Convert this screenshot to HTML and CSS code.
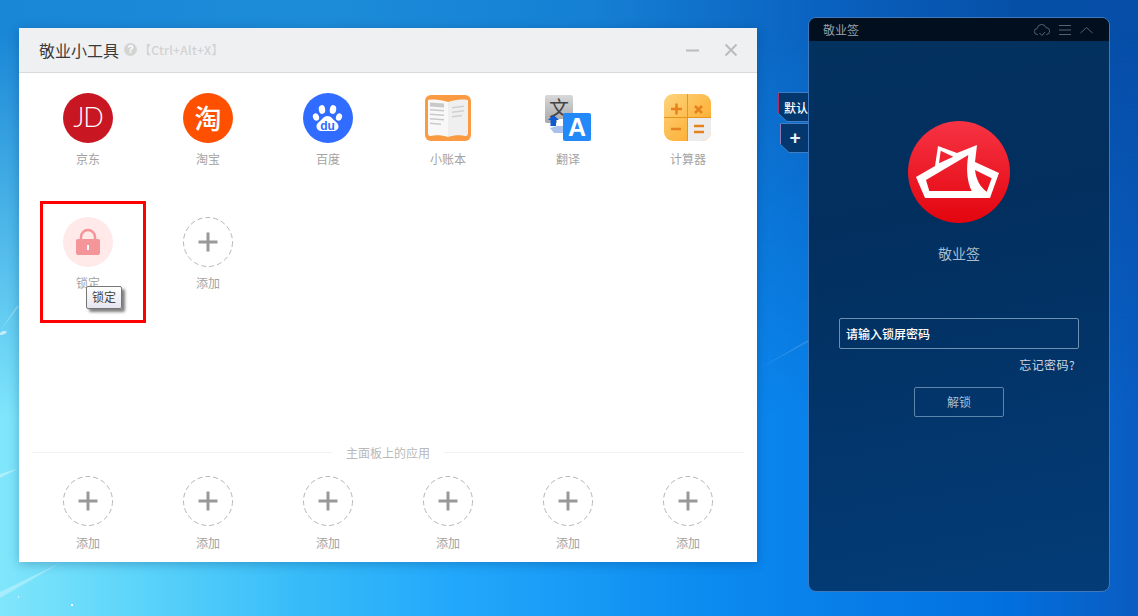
FILE: index.html
```html
<!DOCTYPE html>
<html lang="zh-CN">
<head>
<meta charset="utf-8">
<title>敬业小工具</title>
<link rel="stylesheet" href="styles.css">
</head>
<body>
<div class="desktop">
  <svg class="wallpaper" viewBox="0 0 1138 616" width="1138" height="616">
    <path d="M0 598 L62 562 L0 592Z" fill="#fff" fill-opacity=".3"/>
    <path d="M0 478 L19 468 L0 474Z" fill="#fff" fill-opacity=".35"/>
    <path d="M0 331 L19 306 L17 306Z" fill="#fff" fill-opacity=".35"/>
    <path d="M0 333 q4 -4 7 -1 q-2 3 -7 3Z" fill="#fff" fill-opacity=".6"/>
    <path d="M757 370 L808 340 L808 342Z" fill="#fff" fill-opacity=".14"/>
    <rect x="71" y="604" width="2" height="2" fill="#fff"/>
    <rect x="18" y="596" width="1" height="2" fill="#fff" fill-opacity=".6"/>
  </svg>

  <section class="tool-window">
    <header class="tool-head">
      <h1 class="tool-title">敬业小工具</h1>
      <span class="help">?</span>
      <span class="shortcut">【Ctrl+Alt+X】</span>
      <span class="head-spacer"></span>
      <svg class="win-btn" width="14" height="14" viewBox="0 0 14 14"><path d="M0 7.500H13" stroke="#bcbcbc" stroke-width="2"/></svg>
      <svg class="win-btn" width="14" height="14" viewBox="0 0 14 14"><path d="M1.500 1.500L12.500 12.500M12.500 1.500L1.500 12.500" stroke="#bcbcbc" stroke-width="2"/></svg>
    </header>

    <div class="tool-grid">
      <div class="tool">
        <svg class="tool-icon" viewBox="0 0 50 50"><circle cx="25" cy="25" r="25" fill="#c81623"/><text x="25" y="34" class="jd-text">JD</text></svg>
        <span class="tool-label">京东</span>
      </div>
      <div class="tool">
        <div class="tool-icon glyph-icon taobao">淘</div>
        <span class="tool-label">淘宝</span>
      </div>
      <div class="tool">
        <svg class="tool-icon" viewBox="0 0 50 50">
          <circle cx="25" cy="25" r="25" fill="#306cff"/>
          <ellipse cx="19" cy="16.500" rx="3.200" ry="4.400" fill="#fff" transform="rotate(-8 19 16.500)"/>
          <ellipse cx="30" cy="16.500" rx="3.200" ry="4.400" fill="#fff" transform="rotate(10 30 16.500)"/>
          <ellipse cx="13" cy="24" rx="3" ry="3.800" fill="#fff" transform="rotate(-20 13 24)"/>
          <ellipse cx="36" cy="24" rx="3" ry="3.800" fill="#fff" transform="rotate(20 36 24)"/>
          <path d="M24.500 23c3.500 0 5 3 7.500 5c2.500 2 3.500 3.500 3.500 5.500c0 3-3 5-6 4.500h-10c-3 .5-6-1.500-6-4.500c0-2 1-3.500 3.500-5.500c2.500-2 4-5 7.500-5z" fill="#fff"/>
          <text x="24.500" y="36.500" class="du-text">du</text>
        </svg>
        <span class="tool-label">百度</span>
      </div>
      <div class="tool">
        <svg class="tool-icon" viewBox="0 0 50 50">
          <rect x="2" y="2" width="46" height="46" rx="6" fill="#fa9a42"/>
          <path d="M5 7c7-1 14 0 20 2v35c-6-2-13-2-17-1c-2 .5-3-1-3-3z" fill="#f8f8f8"/>
          <path d="M25 9c6-2 12-3 20-2v33c0 2-1 3.500-3 3c-4-1-11-1-17 1z" fill="#efefef"/>
          <path d="M7 9.500l14 1v4l-14-1zM7 16l14 1v1.500l-14-1zM7 20.500l14 1v1.500l-14-1zM7 25l14 1v1.500l-14-1zM7 29.500l11 1v1.500l-11-1z" fill="#c9c9c9"/>
          <path d="M29 14l12-1.500v1.500l-12 1.500zM29 18.500l12-1.500v1.500l-12 1.500zM29 23l10-1.200v1.500l-10 1.200z" fill="#cfcfcf"/>
        </svg>
        <span class="tool-label">小账本</span>
      </div>
      <div class="tool">
        <svg class="tool-icon" viewBox="0 0 50 50">
          <defs>
            <linearGradient id="wenBg" x1="0" y1="0" x2="0" y2="1">
              <stop offset="0" stop-color="#d8d8d8"/>
              <stop offset="1" stop-color="#a8a8a8"/>
            </linearGradient>
          </defs>
          <rect x="2" y="2" width="28" height="28" rx="2" fill="url(#wenBg)"/>
          <text x="16" y="23" class="wen-text">文</text>
          <path d="M7 35l4 5h10v-7H14z" fill="#a9c2ec"/>
          <path d="M14 26h8v7h-8z" fill="#fff"/>
          <path d="M7.500 33v-6h-2.500l5.500-5l5.500 5h-3v6z" fill="#0d5bd0"/>
          <rect x="20" y="20" width="28" height="28" rx="2" fill="#2389f8"/>
          <text x="34" y="43" class="a-text">A</text>
        </svg>
        <span class="tool-label">翻译</span>
      </div>
      <div class="tool">
        <svg class="tool-icon" viewBox="0 0 50 50">
          <defs>
            <linearGradient id="calcBg" x1="0" y1="0" x2="1" y2="1">
              <stop offset="0" stop-color="#fdd47e"/>
              <stop offset="1" stop-color="#fda51f"/>
            </linearGradient>
          </defs>
          <rect x="1" y="1" width="47" height="47" rx="9" fill="url(#calcBg)"/>
          <path d="M24.500 24.500h23.500V39a9 9 0 0 1-9 9H24.500z" fill="#ececec"/>
          <path d="M24.500 1v47M1 24.500h47" stroke="#e8951c" stroke-width="1"/>
          <path d="M8 16h11M13.500 10.500v11" stroke="#e5821e" stroke-width="2.500" fill="none"/>
          <path d="M32 13l7 7M39 13l-7 7" stroke="#e5821e" stroke-width="2.500" fill="none"/>
          <path d="M8 36h10" stroke="#e5821e" stroke-width="2.500"/>
          <path d="M31 33h10M31 39h10" stroke="#e5821e" stroke-width="2.500"/>
        </svg>
        <span class="tool-label">计算器</span>
      </div>
      <div class="tool">
        <svg class="tool-icon" viewBox="0 0 50 50">
          <circle cx="25" cy="25" r="25" fill="#ffe9e9"/>
          <path d="M18 24v-4a7 7 0 0 1 14 0v4" fill="none" stroke="#f4959a" stroke-width="2.500"/>
          <rect x="13" y="22" width="24" height="16" rx="2" fill="#f4959a"/>
          <rect x="24" y="28" width="2" height="5" fill="#fff"/>
        </svg>
        <span class="tool-label">锁定</span>
      </div>
      <div class="tool">
        <svg class="tool-icon" viewBox="0 0 50 50"><circle class="add-ring" cx="25" cy="25" r="24.500"/><path class="add-plus" d="M15.500 25h19M25 15.500v19"/></svg>
        <span class="tool-label">添加</span>
      </div>
    </div>

    <div class="divider"><span>主面板上的应用</span></div>

    <div class="tool-grid bottom-grid">
      <div class="tool"><svg class="tool-icon" viewBox="0 0 50 50"><circle class="add-ring" cx="25" cy="25" r="24.500"/><path class="add-plus" d="M15.500 25h19M25 15.500v19"/></svg><span class="tool-label">添加</span></div>
      <div class="tool"><svg class="tool-icon" viewBox="0 0 50 50"><circle class="add-ring" cx="25" cy="25" r="24.500"/><path class="add-plus" d="M15.500 25h19M25 15.500v19"/></svg><span class="tool-label">添加</span></div>
      <div class="tool"><svg class="tool-icon" viewBox="0 0 50 50"><circle class="add-ring" cx="25" cy="25" r="24.500"/><path class="add-plus" d="M15.500 25h19M25 15.500v19"/></svg><span class="tool-label">添加</span></div>
      <div class="tool"><svg class="tool-icon" viewBox="0 0 50 50"><circle class="add-ring" cx="25" cy="25" r="24.500"/><path class="add-plus" d="M15.500 25h19M25 15.500v19"/></svg><span class="tool-label">添加</span></div>
      <div class="tool"><svg class="tool-icon" viewBox="0 0 50 50"><circle class="add-ring" cx="25" cy="25" r="24.500"/><path class="add-plus" d="M15.500 25h19M25 15.500v19"/></svg><span class="tool-label">添加</span></div>
      <div class="tool"><svg class="tool-icon" viewBox="0 0 50 50"><circle class="add-ring" cx="25" cy="25" r="24.500"/><path class="add-plus" d="M15.500 25h19M25 15.500v19"/></svg><span class="tool-label">添加</span></div>
    </div>

    <div class="highlight-box"></div>
    <div class="tooltip">锁定</div>
  </section>

  <div class="note-tabs">
    <div class="note-tab tab-default">
      <svg class="tab-shape" viewBox="0 0 32 30" preserveAspectRatio="none"><path d="M.5 .5H32V29.500H9L.5 21.500Z" fill="#04376d" stroke="#3f7dc4"/><path d="M.5 1V21" stroke="#b0306a"/></svg>
      <span class="tab-text">默认</span>
    </div>
    <div class="note-tab tab-add">
      <svg class="tab-shape" viewBox="0 0 30 30" preserveAspectRatio="none"><path d="M.5 .5H30V29.500H9L.5 21.500Z" fill="#04376d" stroke="#3f7dc4"/><path d="M.5 1V21" stroke="#8a7ab8"/></svg>
      <span class="tab-plus">+</span>
    </div>
  </div>

  <aside class="note-panel">
    <header class="note-head">
      <span class="note-title">敬业签</span>
      <span class="head-spacer"></span>
      <svg width="16" height="14" viewBox="0 0 16 14"><path d="M4 11.500H3.500a3 3 0 0 1-.3-6a4.500 4.500 0 0 1 8.800-.8a3.300 3.300 0 0 1 .5 6.800H12M5.500 10l2.500 2.500l3-3.500" fill="none" stroke="#56626e" stroke-width="1"/></svg>
      <svg width="12" height="12" viewBox="0 0 12 12"><path d="M0 1.500H12M0 6H12M0 10.500H12" stroke="#56626e" stroke-width="1"/></svg>
      <svg width="13" height="12" viewBox="0 0 13 12"><path d="M.5 9L6.500 3.500L12.500 9" fill="none" stroke="#56626e" stroke-width="1"/></svg>
    </header>
    <div class="note-body">
      <svg class="note-logo" width="102" height="102" viewBox="0 0 102 102">
        <defs>
          <linearGradient id="logoRed" x1="0" y1="0" x2="0" y2="1">
            <stop offset="0" stop-color="#f63344"/>
            <stop offset="1" stop-color="#e3050e"/>
          </linearGradient>
        </defs>
        <circle cx="51" cy="51" r="51" fill="url(#logoRed)"/>
        <path fill="#fff" fill-rule="evenodd" d="M8 56L27 45L30 25L49 32L69 24L67 41L91 52L82 77H17Z
          M32.700 29.700L45.300 35.700L31 42.300Z
          M18 59L60.300 34C58 48 59 60 63.700 70H21.300Z
          M67 49L83.700 57.300L78.700 70.700C72 66 68 58 67 49Z"/>
      </svg>
      <div class="note-name">敬业签</div>
      <div class="pwd-input">请输入锁屏密码</div>
      <div class="forgot">忘记密码?</div>
      <div class="unlock">解锁</div>
    </div>
  </aside>
</div>
</body>
</html>
```
FILE: styles.css
```css
* { box-sizing: border-box; }
html, body { margin: 0; padding: 0; overflow: hidden; }
body { font-family: "Noto Sans CJK SC", "Liberation Sans", sans-serif; }

.desktop {
  position: relative;
  width: 1138px;
  height: 616px;
  overflow: hidden;
  background: linear-gradient(90deg, #1a86d6 0%, #1c8cd8 28%, #1580d4 52%, #0a62c0 72%, #054fa6 90%, #064ea8 100%);
}
.desktop::before {
  content: "";
  position: absolute;
  inset: 0;
  background: linear-gradient(90deg, #80e6fb 0%, #5cd4fa 12%, #38bcf8 26%, #22a8fb 40%, #0c8bf0 62%, #0270e0 88%, #0a5cc0 100%);
  -webkit-mask-image: linear-gradient(180deg, transparent 5%, #000 68%);
  mask-image: linear-gradient(180deg, transparent 5%, #000 68%);
}
.wallpaper { position: absolute; left: 0; top: 0; z-index: 1; }

/* tool window */
.tool-window {
  position: absolute;
  z-index: 2;
  left: 19px;
  top: 28px;
  width: 738px;
  height: 534px;
  background: #fff;
  display: flex;
  flex-direction: column;
  box-shadow: 0 2px 10px rgba(0, 40, 90, .28);
}
.tool-head {
  height: 45px;
  flex: none;
  display: flex;
  align-items: center;
  padding: 0 19px 1px 20px;
  background: #eff0f2;
  border-bottom: 1px solid #d8d8dd;
}
.tool-title { margin: 0; font-size: 16px; font-weight: 400; color: #3a3a3a; line-height: 20px; }
.help {
  width: 13px; height: 13px; margin-left: 5px;
  border-radius: 50%;
  background: #d4d4d4; color: #fff;
  font: bold 10px/13px "Liberation Sans", sans-serif;
  text-align: center;
}
.shortcut { font-size: 12px; color: #d2d2d2; font-weight: 500; margin-left: 2px; letter-spacing: .3px; }
.head-spacer { flex: 1; }
.win-btn { display: block; margin-left: 24px; }

.tool-grid {
  display: grid;
  grid-template-columns: repeat(6, 120px);
  grid-auto-rows: 124px;
  padding: 20px 0 0 9px;
  height: 367px;
  flex: none;
}
.tool { display: flex; flex-direction: column; align-items: center; }
.tool-icon { width: 50px; height: 50px; display: block; flex: none; }
.tool-label { margin-top: 7px; font-size: 12px; line-height: 18px; color: #a3a3a3; }

.glyph-icon {
  border-radius: 50%;
  display: flex; align-items: center; justify-content: center;
}
.taobao { background: #ff5000; color: #fff; font-size: 27px; font-weight: 500; line-height: 50px; }

.jd-text {
  font-family: "Lato", "Liberation Sans", sans-serif;
  font-weight: 300;
  font-size: 27px; fill: #fff; text-anchor: middle; letter-spacing: -1px;
}
.du-text {
  font-family: "Liberation Sans", sans-serif;
  font-size: 12px; font-weight: 700; fill: #306cff; text-anchor: middle;
}
.wen-text { font-size: 20px; fill: #444; text-anchor: middle; }
.a-text {
  font-family: "Liberation Sans", sans-serif;
  font-size: 25px; font-weight: 700; fill: #fff; text-anchor: middle;
}

.add-ring { fill: none; stroke: #b5b5b5; stroke-width: 1; stroke-dasharray: 5 3; }
.add-plus { fill: none; stroke: #999; stroke-width: 3; }

.divider {
  flex: none;
  margin: 0 13px;
  height: 24px;
  display: flex;
  align-items: center;
  gap: 14px;
  font-size: 12px;
  color: #b9b9b9;
}
.divider::before, .divider::after {
  content: "";
  height: 1px;
  background: #f2f2f2;
}
.divider::before { width: 300px; }
.divider::after { flex: 1; }

.bottom-grid { padding-top: 12px; height: auto; }
.bottom-grid .tool-label { margin-top: 8px; }

.highlight-box {
  position: absolute;
  left: 21px; top: 173px;
  width: 106px; height: 122px;
  border: 3px solid #f00;
}
.tooltip {
  position: absolute;
  left: 67px; top: 258px;
  width: 36px; height: 23px;
  border: 1px solid #767676;
  border-radius: 2px;
  background: linear-gradient(#fff, #e4e5f0);
  box-shadow: 3px 3px 3px rgba(60, 60, 60, .65);
  font-size: 12px;
  line-height: 20px;
  text-align: center;
  color: #444;
}

/* note panel */
.note-tabs {
  position: absolute;
  z-index: 2;
  left: 778px; top: 92px;
  width: 32px;
  display: flex;
  flex-direction: column;
  align-items: flex-end;
  gap: 1px;
}
.note-tab { position: relative; height: 30px; display: flex; align-items: center; }
.tab-default { width: 32px; padding-left: 6px; }
.tab-add { width: 30px; justify-content: center; padding-right: 0; }
.tab-shape { position: absolute; left: 0; top: 0; height: 30px; width: 100%; }
.tab-text { position: relative; font-size: 12px; color: #fff; white-space: nowrap; font-weight: 500; }
.tab-plus { position: relative; font: bold 19px/30px "Liberation Sans", sans-serif; color: #e8eef5; }

.note-panel {
  position: absolute;
  z-index: 3;
  left: 808px; top: 17px;
  width: 302px; height: 575px;
  border: 1px solid #3f79bd;
  border-radius: 8px;
  overflow: hidden;
  display: flex;
  flex-direction: column;
  background: linear-gradient(170deg, #04325f 0%, #022f5e 35%, #033c78 100%);
}
.note-head {
  height: 23px;
  flex: none;
  display: flex;
  align-items: center;
  gap: 9px;
  padding: 0 16px 0 14px;
  background: #010f1f;
}
.note-title { font-size: 12px; color: #99a2ab; }
.note-body {
  flex: 1;
  display: flex;
  flex-direction: column;
  align-items: center;
  padding-top: 80px;
}
.note-logo { display: block; flex: none; }
.note-name { margin-top: 20px; font-size: 14px; line-height: 20px; color: #a6bccf; }
.pwd-input {
  margin-top: 55px;
  width: 240px; height: 31px;
  border: 1px solid #6c8fb2;
  border-radius: 2px;
  padding-left: 6px;
  font-size: 12px; line-height: 29px; font-weight: 500;
  color: #fff;
}
.forgot {
  align-self: flex-end;
  margin: 7px 34px 0 0;
  font-size: 12px; line-height: 18px;
  letter-spacing: .4px;
  color: #cbd8e4;
}
.unlock {
  margin-top: 13px;
  width: 90px; height: 30px;
  border: 1px solid #5d85ab;
  border-radius: 2px;
  font-size: 12px; line-height: 28px; text-align: center;
  color: #a9bfd3;
}
```
